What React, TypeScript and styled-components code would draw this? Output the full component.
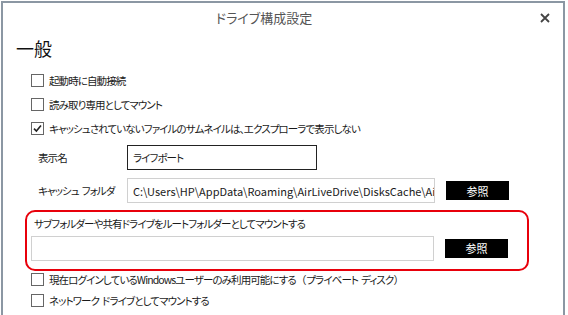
import React from 'react';
import styled, {createGlobalStyle} from "styled-components";

const GlobalStyle = createGlobalStyle`
    html, body {
        margin: 0;
        padding: 0;
        background: #fff;
        overflow: hidden;
    }
    body {
        font-family: "Noto Sans CJK JP", "Noto Sans", sans-serif;
        font-feature-settings: "palt" 1;
        color: #1a1a1a;
    }
`

const Check = ({checked}: {checked?: boolean}) => (
    <Box>
        {checked && (
            <svg width="11" height="11" viewBox="0 0 11 11">
                <path d="M2 5.6 L4.4 8 L9 2.6" fill="none" stroke="#222" strokeWidth="1.6"/>
            </svg>
        )}
    </Box>
);

export default function App() {
    return (
        <>
            <GlobalStyle/>
            <Window>
                <TitleBar>
                    <span/>
                    <Title>ドライブ構成設定</Title>
                    <Close>
                        <svg width="10" height="10" viewBox="0 0 10 10">
                            <path d="M1 1 L9 9 M9 1 L1 9" stroke="#444" strokeWidth="1.8"/>
                        </svg>
                    </Close>
                </TitleBar>
                <Content>
                    <Heading>一般</Heading>
                    <CheckList>
                        <CheckRow><Check/>起動時に自動接続</CheckRow>
                        <CheckRow><Check/>読み取り専用としてマウント</CheckRow>
                        <CheckRow><Check checked/>キャッシュされていないファイルのサムネイルは、エクスプローラで表示しない</CheckRow>
                    </CheckList>
                    <FieldRow>
                        <Label>表示名</Label>
                        <Input $width={190} $dark $jp>ライフポート</Input>
                    </FieldRow>
                    <FieldRow>
                        <Label>キャッシュ&nbsp;&nbsp;フォルダ</Label>
                        <Input $width={308}>C:\Users\HP\AppData\Roaming\AirLiveDrive\DisksCache\Air</Input>
                        <Button>参照</Button>
                    </FieldRow>
                    <Highlight>
                        <SubLabel>サブフォルダーや共有ドライブをルートフォルダーとしてマウントする</SubLabel>
                        <FieldRow $tight>
                            <Input $width={403}/>
                            <Button>参照</Button>
                        </FieldRow>
                    </Highlight>
                    <BottomList>
                        <CheckRow>
                            <Check/>
                            <span>現在ログインしているWindowsユーザーのみ利用可能にする<Paren>（</Paren>プライベート&nbsp;&nbsp;ディスク<Paren>）</Paren></span>
                        </CheckRow>
                        <CheckRow><Check/>ネットワーク&nbsp;&nbsp;ドライブとしてマウントする</CheckRow>
                    </BottomList>
                </Content>
            </Window>
        </>
    );
}

const Window = styled.div`
    margin: 1px 0 0 1px;
    width: 560px;
    height: 330px;
    border: 2px solid #8b97a3;
    border-bottom: none;
    background: #fff;
`

const TitleBar = styled.div`
    display: grid;
    grid-template-columns: 1fr auto 1fr;
    align-items: center;
    height: 29px;
`

const Title = styled.div`
    font-size: 13px;
    color: #555;
    padding-right: 38px;
`

const Close = styled.div`
    justify-self: end;
    margin-right: 13px;
    display: flex;
`

const Content = styled.div`
    padding-left: 13px;
`

const Heading = styled.div`
    font-size: 18px;
    line-height: 24px;
    color: #111;
    margin-top: 4px;
`

const CheckList = styled.div`
    display: flex;
    flex-direction: column;
    gap: 7px;
    margin-top: 12px;
    margin-left: 15px;
`

const CheckRow = styled.div`
    display: flex;
    align-items: center;
    gap: 5px;
    font-size: 10.5px;
    letter-spacing: -0.9px;
    line-height: 17px;
    color: #1a1a1a;
    white-space: nowrap;
`

const Paren = styled.span`
    font-feature-settings: normal;
    letter-spacing: 0;
`

const Box = styled.div`
    width: 11px;
    height: 11px;
    border: 1px solid #666;
    box-sizing: content-box;
    display: flex;
    background: #fff;
    flex-shrink: 0;
`

const FieldRow = styled.div<{ $tight?: boolean }>`
    display: flex;
    align-items: center;
    gap: 11px;
    margin-top: ${p => p.$tight ? 4 : 8}px;
`

const Label = styled.div`
    box-sizing: border-box;
    width: 111px;
    margin-right: -11px;
    padding-left: 22px;
    flex-shrink: 0;
    font-size: 10.5px;
    letter-spacing: -0.9px;
    color: #1a1a1a;
    white-space: nowrap;
`

const Input = styled.div<{ $width: number; $dark?: boolean; $jp?: boolean }>`
    box-sizing: border-box;
    width: ${p => p.$width}px;
    height: 25px;
    flex-shrink: 0;
    border: 1px solid ${p => p.$dark ? "#222" : "#d0d0d0"};
    padding: 0 5px;
    display: flex;
    align-items: center;
    font-size: ${p => p.$jp ? "10.5px" : "11px"};
    letter-spacing: ${p => p.$jp ? "-0.9px" : "0"};
    white-space: nowrap;
    overflow: hidden;
`

const Button = styled.div`
    width: 63px;
    height: 19px;
    background: #000;
    color: #fff;
    font-size: 11px;
    display: flex;
    align-items: center;
    justify-content: center;
`

const Highlight = styled.div`
    box-sizing: border-box;
    width: 504px;
    margin: 7px 0 0 9px;
    padding: 3.5px 0 8.5px 4px;
    border: 2.5px solid #e8000b;
    border-radius: 10px;
`

const SubLabel = styled.div`
    font-size: 10.5px;
    letter-spacing: -0.9px;
    line-height: 16px;
    padding-left: 3px;
    white-space: nowrap;
`

const BottomList = styled.div`
    display: flex;
    flex-direction: column;
    gap: 4px;
    margin-top: 0px;
    margin-left: 15px;
`
